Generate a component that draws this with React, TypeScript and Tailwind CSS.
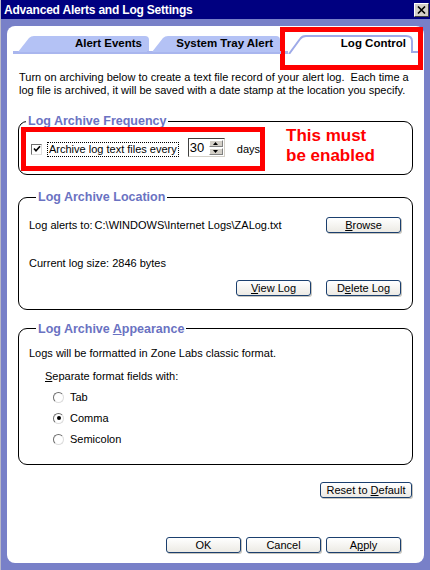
import React from "react";

const Btn = ({ children, className = "" }: { children: React.ReactNode; className?: string }) => (
  <button
    className={
      "h-[16px] border border-[#1b3f6e] rounded-[3px] bg-gradient-to-b from-white to-[#eceae4] text-[11px] leading-[14px] text-black shadow-[1px_1px_0_#c7c5bd] " +
      className
    }
  >
    {children}
  </button>
);

const Group = ({
  title,
  children,
  className = "",
}: {
  title: React.ReactNode;
  children: React.ReactNode;
  className?: string;
}) => (
  <fieldset className={"mx-[11px] border border-black rounded-[9px] " + className}>
    <legend className="ml-[7px] px-[2px] text-[12.5px] font-bold leading-[14px] text-[#6a72c2]">{title}</legend>
    {children}
  </fieldset>
);

const Radio = ({ label, checked = false }: { label: string; checked?: boolean }) => (
  <div className="flex items-center h-[21px] gap-[6px]">
    <span className="w-[11px] h-[11px] rounded-full border border-t-[#6d6d6d] border-l-[#6d6d6d] border-b-[#dcdcdc] border-r-[#dcdcdc] bg-white flex items-center justify-center">
      {checked && <span className="w-[4px] h-[4px] rounded-full bg-black" />}
    </span>
    <span>{label}</span>
  </div>
);

const Tab = ({ label, width }: { label: string; width: number }) => (
  <div className="relative h-[19px] flex items-center justify-end pr-[8px] pb-[2px]" style={{ width }}>
    <svg className="absolute inset-0" width={width} height={19}>
      <rect x="0" y="16" width={width} height="3" fill="#a9b6ee" />
      <path
        d={`M5 17 L16 3 Q18 1 21 1 L${width - 5} 1 Q${width - 1} 1 ${width - 1} 5 L${width - 1} 17 Z`}
        fill="#b4c2f5"
      />
    </svg>
    <span className="relative font-bold text-[11.5px] text-black">{label}</span>
  </div>
);

export default function App() {
  return (
    <div className="w-[430px] h-[570px] flex flex-col bg-[#7880c8] font-['Liberation_Sans',Arial,sans-serif] text-[11px] text-black border-l border-[#b8b8c8]">
      {/* title bar */}
      <div className="h-[19px] bg-[#000080] flex items-center justify-between pl-[3px] pr-[1px]">
        <span className="text-white font-bold text-[12px] tracking-[-0.2px]">Advanced Alerts and Log Settings</span>
        <span className="w-[15px] h-[14px] bg-[#d4d0c8] border border-t-white border-l-white border-b-[#404040] border-r-[#404040] flex items-center justify-center">
          <svg width="9" height="8" viewBox="0 0 9 8">
            <path d="M1 0.5 L8 7.5 M8 0.5 L1 7.5" stroke="black" strokeWidth="1.6" />
          </svg>
        </span>
      </div>

      <div className="flex-1 flex pl-[6px] pr-[6px] pt-[7px] pb-[7px]">
        <div className="relative flex-1 bg-white rounded-[8px] flex flex-col">
          {/* red annotation round the active tab */}
          <div className="absolute left-[273px] top-[1px] w-[143px] h-[43px] border-[5px] border-[#ff0000]" />

          {/* tabs */}
          <div className="flex items-end mt-[9px] pl-[6px]">
            <Tab label="Alert Events" width={137} />
            <div className="-ml-[3px]">
              <Tab label="System Tray Alert" width={134} />
            </div>
            <div className="w-[7px] h-[3px] bg-[#a9b6ee]" />
            <div className="relative w-[130px] h-[19px] flex items-center justify-end pr-[12px] pb-[2px]">
              <svg className="absolute inset-0" width="130" height="19">
                <path
                  d="M1 19 L12 4 Q14 1 18 1 L118 1 Q124 1 124 6 L124 17 L130 17"
                  fill="white"
                  stroke="#9eaae8"
                  strokeWidth="2"
                />
              </svg>
              <span className="relative font-bold text-[11.5px]">Log Control</span>
            </div>
          </div>

          <p className="mt-[17px] ml-[12px] leading-[13px] whitespace-pre">
            {"Turn on archiving below to create a text file record of your alert log.  Each time a"}
            <br />
            {"log file is archived, it will be saved with a date stamp at the location you specify."}
          </p>

          <Group title="Log Archive Frequency" className="mt-[17px] pb-[3px]">
            <div className="flex items-start -mt-[1px] ml-[2px]">
              <div className="w-[244px] h-[44px] border-[5px] border-[#ff0000] flex items-center pl-[5px]">
                <span className="w-[11px] h-[11px] border border-t-[#6d6d6d] border-l-[#6d6d6d] border-b-[#dcdcdc] border-r-[#dcdcdc] bg-white flex items-center justify-center">
                  <svg width="8" height="8" viewBox="0 0 8 8">
                    <path d="M1 3.5 L3 5.8 L7 1.2" stroke="black" strokeWidth="1.6" fill="none" />
                  </svg>
                </span>
                <span className="ml-[5px] px-[1px] border border-dotted border-black leading-[13px]">
                  Archive log text files every
                </span>
                <div className="ml-[9px] flex h-[19px] w-[37px] border border-t-[#404040] border-l-[#404040] border-b-[#d4d0c8] border-r-[#d4d0c8] bg-white -mt-[4px]">
                  <span className="flex-1 pl-[1px] text-[13px] leading-[17px]">30</span>
                  <div className="flex flex-col w-[15px] py-[1px] pr-[1px] gap-[1px]">
                    <span className="flex-1 bg-[#d4d0c8] border border-t-white border-l-white border-b-[#808080] border-r-[#808080] flex items-center justify-center">
                      <svg width="5" height="3" viewBox="0 0 5 3">
                        <path d="M2.5 0 L5 3 L0 3 Z" fill="black" />
                      </svg>
                    </span>
                    <span className="flex-1 bg-[#d4d0c8] border border-t-white border-l-white border-b-[#808080] border-r-[#808080] flex items-center justify-center">
                      <svg width="5" height="3" viewBox="0 0 5 3">
                        <path d="M0 0 L5 0 L2.5 3 Z" fill="black" />
                      </svg>
                    </span>
                  </div>
                </div>
                <span className="ml-[12px]">days</span>
              </div>
              <div className="ml-[21px] -mt-[1px] text-[#ff0000] font-bold text-[17px] leading-[20px]">
                This must
                <br />
                be enabled
              </div>
            </div>
          </Group>

          <Group title="Log Archive Location" className="mt-[15px] px-[10px] pr-[11px] pb-[13px]">
            <div className="flex items-center justify-between mt-[13px]">
              <div className="flex gap-[2px]">
                <span>Log alerts to:</span>
                <span>C:\WINDOWS\Internet Logs\ZALog.txt</span>
              </div>
              <Btn className="w-[75px]">
                <u>B</u>rowse
              </Btn>
            </div>
            <p className="mt-[23px] leading-[13px]">Current log size: 2846 bytes</p>
            <div className="flex justify-end gap-[15px] mt-[10px]">
              <Btn className="w-[75px]">
                <u>V</u>iew Log
              </Btn>
              <Btn className="w-[75px]">
                D<u>e</u>lete Log
              </Btn>
            </div>
          </Group>

          <Group
            title={
              <>
                Log Archive <u>A</u>ppearance
              </>
            }
            className="mt-[12px] px-[10px] pb-[14px]"
          >
            <p className="mt-[11px] leading-[13px]">Logs will be formatted in Zone Labs classic format.</p>
            <p className="mt-[10px] ml-[16px] leading-[13px]">
              <u>S</u>eparate format fields with:
            </p>
            <div className="ml-[24px] mt-[4px]">
              <Radio label="Tab" />
              <Radio label="Comma" checked />
              <Radio label="Semicolon" />
            </div>
          </Group>

          <div className="flex justify-end mr-[12px] mt-[17px]">
            <Btn className="w-[92px]">
              Reset to <u>D</u>efault
            </Btn>
          </div>

          <div className="mt-auto mb-[10px] mr-[23px] flex justify-end gap-[5px]">
            <Btn className="w-[75px]">OK</Btn>
            <Btn className="w-[75px]">Cancel</Btn>
            <Btn className="w-[75px]">
              A<u>p</u>ply
            </Btn>
          </div>
        </div>
      </div>
    </div>
  );
}
